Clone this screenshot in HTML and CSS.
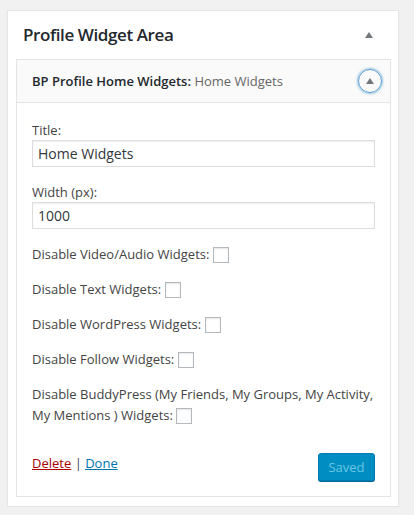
FILE: index.html
```html
<!DOCTYPE html>
<html lang="en">
<head>
<meta charset="utf-8">
<title>Profile Widget Area</title>
<link rel="stylesheet" href="styles.css">
</head>
<body>
<div class="sidebar">
  <div class="sidebar-name">
    <h2>Profile Widget Area</h2>
    <svg class="arrow" width="8" height="6" viewBox="0 0 8 6"><polygon points="4,0 8,6 0,6" fill="#72777c"/></svg>
  </div>
  <div class="widget">
    <div class="widget-top">
      <h3>BP Profile Home Widgets:<span class="in-title"> Home Widgets</span></h3>
      <span class="toggle"><svg width="8" height="6" viewBox="0 0 8 6"><polygon points="4,0 8,6 0,6" fill="#72777c"/></svg></span>
    </div>
    <div class="widget-inside">
      <form class="form">
        <p class="field"><label class="field-label">Title:</label><input class="text" type="text" value="Home Widgets"></p>
        <p class="field"><label class="field-label">Width (px):</label><input class="text" type="text" value="1000"></p>
        <p class="row">Disable Video/Audio Widgets: <input class="check" type="checkbox"></p>
        <p class="row">Disable Text Widgets: <input class="check" type="checkbox"></p>
        <p class="row">Disable WordPress Widgets: <input class="check" type="checkbox"></p>
        <p class="row">Disable Follow Widgets: <input class="check" type="checkbox"></p>
        <p class="row row-wrap">Disable BuddyPress (My Friends, My Groups, My Activity, My Mentions ) Widgets: <input class="check" type="checkbox"></p>
      </form>
      <div class="controls">
        <div class="links"><a class="delete" href="#">Delete</a> | <a class="done" href="#">Done</a></div>
        <button class="saved" type="button">Saved</button>
      </div>
    </div>
  </div>
</div>
</body>
</html>
```
FILE: styles.css
```css
* { box-sizing: border-box; }
html, body { margin: 0; padding: 0; }
body {
  background: #f1f1f1;
  font-family: "Open Sans", "Noto Sans", sans-serif;
  font-size: 13px;
  color: #444;
}
.sidebar {
  margin: 10px 0 0 7px;
  width: 392px;
  background: #fff;
  border: 1px solid #e5e5e5;
  box-shadow: 0 1px 1px rgba(0,0,0,.04);
  padding: 0 7px 9px 8px;
}
.sidebar-name {
  display: flex;
  align-items: center;
  justify-content: space-between;
  height: 48px;
}
.sidebar-name h2 {
  margin: 0;
  padding-left: 7px;
  font-size: 17px;
  font-weight: 600;
  letter-spacing: -0.4px;
  line-height: 24px;
  color: #23282d;
}
.arrow { margin-right: 18px; }
.widget {
  border: 1px solid #e5e5e5;
  background: #fff;
}
.widget-top {
  display: flex;
  align-items: center;
  justify-content: space-between;
  height: 42px;
  background: #fafafa;
}
.widget-top h3 {
  margin: 0;
  padding-left: 15px;
  font-size: 13px;
  font-weight: 600;
  line-height: 42px;
  color: #23282d;
}
.in-title { font-weight: 400; color: #666; }
.toggle {
  width: 24px;
  height: 24px;
  margin-right: 8px;
  border: 1px solid #5b9dd9;
  border-radius: 50%;
  box-shadow: 0 0 3px rgba(0,115,170,.8);
  display: flex;
  align-items: center;
  justify-content: center;
}
.toggle svg { margin-top: -1px; }
.widget-inside {
  border-top: 1px solid #e5e5e5;
  padding: 2px 15px 15px;
}
.form p { margin: 15px 0; }
.field-label { display: block; line-height: 20px; }
.text {
  display: block;
  width: 100%;
  height: 27px;
  margin: 0;
  padding: 0 5px;
  border: 1px solid #ddd;
  box-shadow: inset 0 1px 2px rgba(0,0,0,.07);
  font-family: inherit;
  font-size: 14px;
  color: #32373c;
  background: #fff;
  outline: none;
}
.row { line-height: 20px; }
.row-wrap { line-height: 21px; }
.check {
  -webkit-appearance: none;
  appearance: none;
  width: 16px;
  height: 16px;
  margin: 0;
  vertical-align: middle;
  position: relative;
  top: -1px;
  border: 1px solid #b4b9be;
  background: #fff;
  box-shadow: inset 0 1px 2px rgba(0,0,0,.1);
}
.controls {
  display: flex;
  justify-content: space-between;
  align-items: flex-start;
  padding-top: 12px;
}
.links { line-height: 20px; }
.delete { color: #a00; }
.done { color: #0073aa; }
.saved {
  width: 57px;
  height: 28px;
  padding: 0;
  border: 1px solid #007cb2;
  border-radius: 3px;
  background: #008ec2;
  color: #66c6e4;
  font-family: inherit;
  font-size: 13px;
  box-shadow: 0 1px 0 #006799;
}
```
